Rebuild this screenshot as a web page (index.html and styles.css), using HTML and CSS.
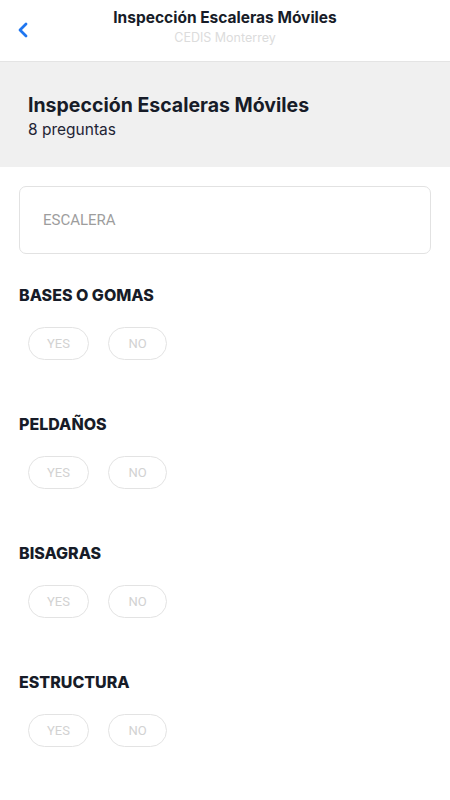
FILE: index.html
```html
<!DOCTYPE html>
<html lang="es">
<head>
    <meta charset="UTF-8" />
    <meta name="viewport" content="width=device-width, initial-scale=1" />
    <title>Inspección Escaleras Móviles</title>
    <link rel="stylesheet" href="styles.css">
</head>
<body>
    <header class="topbar">
        <button class="back" aria-label="Volver">
            <svg width="12" height="16" viewBox="0 0 12 16">
                <path d="M9 2 L3 8 L9 14" fill="none" stroke="#1f76f0" stroke-width="2.8" stroke-linecap="round" stroke-linejoin="round" />
            </svg>
        </button>
        <div class="topbar-text">
            <div class="topbar-title">Inspección Escaleras Móviles</div>
            <div class="topbar-sub">CEDIS Monterrey</div>
        </div>
    </header>

    <section class="summary">
        <h1>Inspección Escaleras Móviles</h1>
        <p>8 preguntas</p>
    </section>

    <main class="questions">
        <div class="field">ESCALERA</div>

        <div class="question">
            <h2>BASES O GOMAS</h2>
            <div class="choices">
                <button class="choice yes">YES</button>
                <button class="choice no">NO</button>
            </div>
        </div>

        <div class="question">
            <h2>PELDAÑOS</h2>
            <div class="choices">
                <button class="choice yes">YES</button>
                <button class="choice no">NO</button>
            </div>
        </div>

        <div class="question">
            <h2>BISAGRAS</h2>
            <div class="choices">
                <button class="choice yes">YES</button>
                <button class="choice no">NO</button>
            </div>
        </div>

        <div class="question">
            <h2>ESTRUCTURA</h2>
            <div class="choices">
                <button class="choice yes">YES</button>
                <button class="choice no">NO</button>
            </div>
        </div>
    </main>
</body>
</html>
```

FILE: styles.css
```css
body {
    margin: 0;
    background: #fff;
    font-family: 'Inter', 'Noto Sans', sans-serif;
    color: #171c28;
}
.topbar {
    position: relative;
    height: 61px;
    border-bottom: 1px solid #e4e4e4;
    display: flex;
    justify-content: center;
    align-items: flex-start;
}
.back {
    position: absolute;
    left: 16px;
    top: 22px;
    padding: 0;
    border: none;
    background: none;
    width: 14px;
    height: 18px;
}
.topbar-text {
    text-align: center;
    padding-top: 8px;
}
.topbar-title {
    font-size: 15.5px;
    font-weight: 700;
    line-height: 20px;
}
.topbar-sub {
    font-size: 12.5px;
    line-height: 20px;
    color: #dcdcdc;
}
.summary {
    background: #f0f0f0;
    height: 105px;
    box-sizing: border-box;
    padding: 30px 28px 0;
}
.summary h1 {
    margin: 0;
    font-size: 19.5px;
    font-weight: 700;
    line-height: 27px;
}
.summary p {
    margin: 0;
    font-size: 15.5px;
    line-height: 22px;
    color: #1e2435;
}
.questions {
    padding: 19px 19px 0;
}
.field {
    height: 68px;
    box-sizing: border-box;
    border: 1px solid #e2e2e2;
    border-radius: 7px;
    padding-left: 23px;
    display: flex;
    align-items: center;
    font-family: 'Roboto', sans-serif;
    font-size: 15px;
    color: #9d9d9d;
}
.question {
    padding-top: 31px;
    height: 98px;
}
.question h2 {
    margin: 0;
    font-size: 16px;
    font-weight: 800;
    line-height: 20px;
}
.choices {
    display: flex;
    gap: 19px;
    padding: 22px 0 0 9px;
}
.choice {
    height: 33px;
    box-sizing: border-box;
    border: 1px solid #e3e3e3;
    border-radius: 17px;
    background: #fff;
    font-family: 'Roboto', sans-serif;
    font-size: 13px;
    color: #d2d2d2;
    padding: 0;
}
.choice.yes {
    width: 61px;
}
.choice.no {
    width: 59px;
}
```
